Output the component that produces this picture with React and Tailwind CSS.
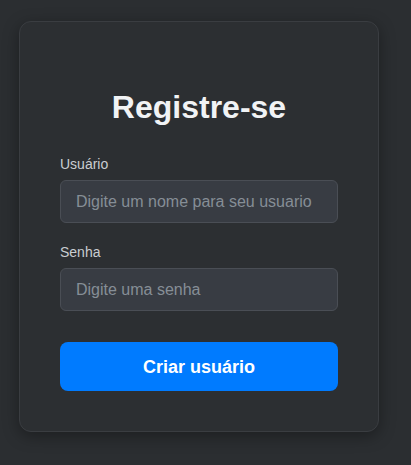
export default function App() {
  return (
    <div
      className="min-h-[465px] w-full bg-[#2b2e31] pl-[19px] pt-[21px]"
      style={{ fontFamily: '"Liberation Sans", Arial, sans-serif' }}
    >
      <div className="w-[360px] rounded-xl border border-[#3a3d41] bg-[#2c2f32] px-10 pt-10 pb-10 shadow-[0_4px_16px_rgba(0,0,0,0.35)]">
        <h2 className="mt-[27px] text-center text-[32px] font-bold leading-[37px] text-[#f1f3f5]">
          Registre-se
        </h2>

        <div className="mt-[30px]">
          <label className="block text-sm leading-[16px] text-[#c9cdd1]">Usuário</label>
          <input
            type="text"
            placeholder="Digite um nome para seu usuario"
            className="mt-2 block h-[43px] w-full rounded-md border border-[#4a4e55] bg-[#383c43] px-[15px] text-base text-[#e9ecef] outline-none placeholder:text-[#868e96]"
          />
        </div>

        <div className="mt-[21px]">
          <label className="block text-sm leading-[16px] text-[#c9cdd1]">Senha</label>
          <input
            type="password"
            placeholder="Digite uma senha"
            className="mt-2 block h-[43px] w-full rounded-md border border-[#4a4e55] bg-[#383c43] px-[15px] text-base text-[#e9ecef] outline-none placeholder:text-[#868e96]"
          />
        </div>

        <button className="mt-[31px] block h-[49px] w-full rounded-lg bg-[#007bff] text-lg font-bold text-white">
          Criar usuário
        </button>
      </div>
    </div>
  )
}
